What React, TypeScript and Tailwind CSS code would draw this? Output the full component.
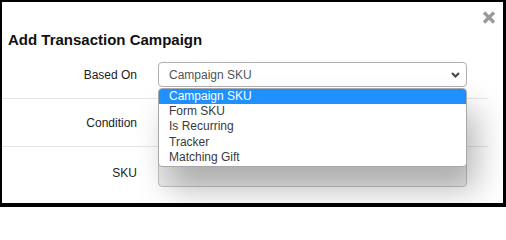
import React from "react";

const options = ["Campaign SKU", "Form SKU", "Is Recurring", "Tracker", "Matching Gift"];

function Chevron() {
  return (
    <svg width="9" height="6" viewBox="0 0 9 6" className="shrink-0">
      <polyline points="1,1 4.5,4.5 8,1" fill="none" stroke="#444" strokeWidth="2" />
    </svg>
  );
}

function CloseIcon() {
  return (
    <svg width="14" height="13" viewBox="0 0 14 13">
      <path d="M2 1.5 L12 11.5 M12 1.5 L2 11.5" stroke="#9a9a9a" strokeWidth="3.4" strokeLinecap="butt" />
    </svg>
  );
}

export default function App() {
  return (
    <div className="w-[506px] h-[207px] bg-black pt-[2px] pl-[2px] pr-[3px] pb-[4px] font-['Liberation_Sans',Arial,sans-serif]">
      <div className="relative h-full bg-white overflow-hidden">
        <div className="flex justify-end pt-[9px] pr-[7px] h-[22px]">
          <CloseIcon />
        </div>
        <h2 className="mt-[7px] pl-[6px] text-[15px] leading-[18px] font-bold text-[#111]">
          Add Transaction Campaign
        </h2>

        <div className="mr-[15px] flex items-center pt-[13px] pb-[11px] border-b border-[#e6e6e6]">
          <label className="w-[135px] text-right text-[12px] text-[#222]">Based On</label>
          <div className="relative ml-[21px]">
            <div className="w-[309px] h-[25px] border border-[#b0b0b0] rounded-[4px] bg-white flex items-center justify-between pl-[10px] pr-[6px] text-[12px] text-[#555]">
              <span>Campaign SKU</span>
              <Chevron />
            </div>
            <ul className="absolute z-10 left-0 top-[26px] w-[309px] bg-white border border-[#a8a8a8] rounded-[4px] pb-[1px] overflow-hidden shadow-[10px_22px_32px_rgba(0,0,0,0.28)] text-[12px]">
              {options.map((o, i) => (
                <li
                  key={o}
                  className={
                    i === 0
                      ? "h-[15px] leading-[15px] pl-[10px] bg-[#1e90ff] text-white"
                      : "h-[15.3px] leading-[15.3px] pl-[10px] text-[#3a3a3a]"
                  }
                >
                  {o}
                </li>
              ))}
            </ul>
          </div>
        </div>

        <div className="mr-[15px] flex items-center pt-[11px] pb-[11px] border-b border-[#e6e6e6]">
          <label className="w-[135px] text-right text-[12px] text-[#222]">Condition</label>
          <div className="ml-[21px] w-[309px] h-[25px] border border-[#b0b0b0] rounded-[4px] bg-white"></div>
        </div>

        <div className="mr-[15px] flex items-center pt-[11px]">
          <label className="w-[135px] text-right text-[12px] text-[#222]">SKU</label>
          <div className="ml-[21px] w-[309px] h-[29px] border border-[#c4c4c4] rounded-[4px] bg-[#eeeeee]"></div>
        </div>
      </div>
    </div>
  );
}
